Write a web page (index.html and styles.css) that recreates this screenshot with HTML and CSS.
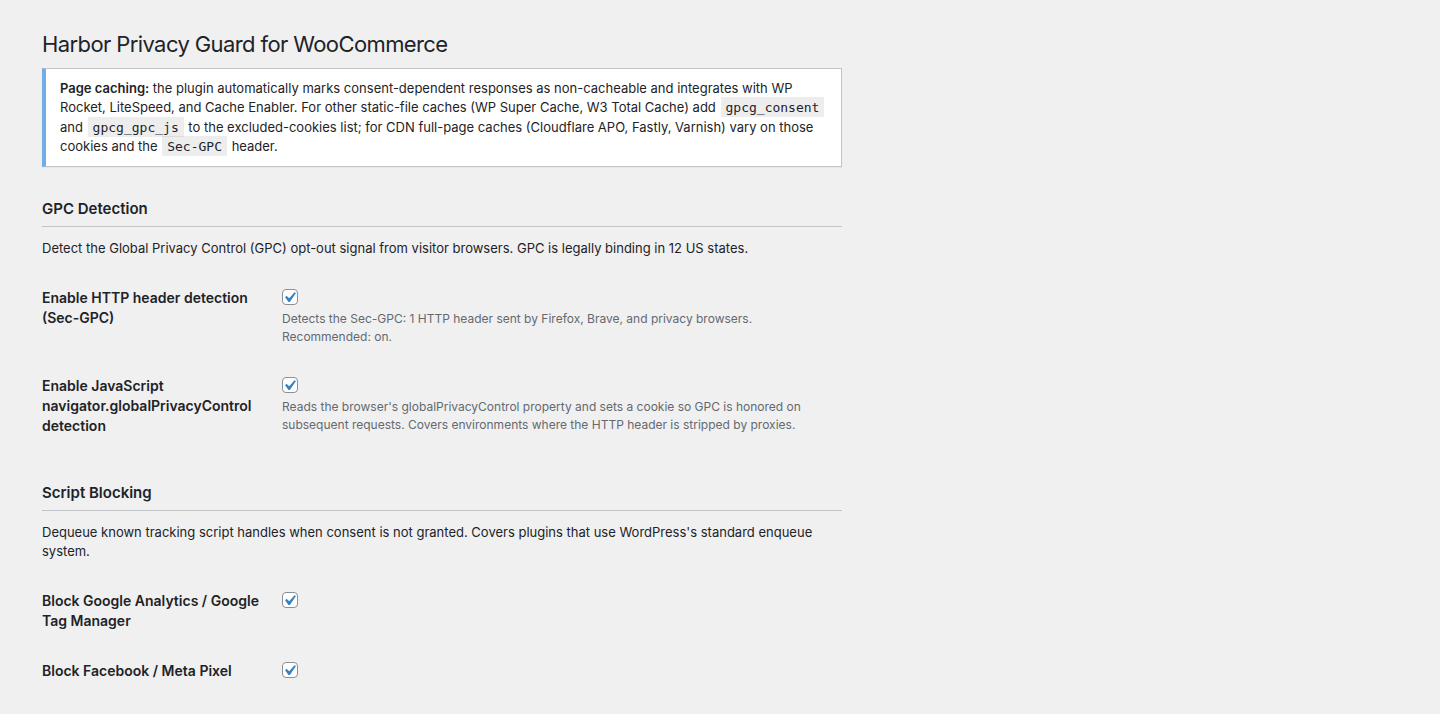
FILE: index.html
```html
<!DOCTYPE html>
<html lang="en">
<head>
    <meta charset="UTF-8">
    <meta name="viewport" content="width=device-width, initial-scale=1.0">
    <title>Harbor Privacy Guard for WooCommerce</title>
    <link rel="stylesheet" href="styles.css">
</head>
<body>
    <div class="wrap">
        <h1>Harbor Privacy Guard for WooCommerce</h1>

        <!-- Caching notice -->
        <div class="notice notice-info">
            <p><strong>Page caching:</strong> the plugin automatically marks consent-dependent responses as non-cacheable and integrates with WP Rocket, LiteSpeed, and Cache Enabler. For other static-file caches (WP Super Cache, W3 Total Cache) add <code>gpcg_consent</code> and <code>gpcg_gpc_js</code> to the excluded-cookies list; for CDN full-page caches (Cloudflare APO, Fastly, Varnish) vary on those cookies and the <code>Sec-GPC</code> header.</p>
        </div>

        <!-- GPC Detection -->
        <h2 class="section-title">GPC Detection</h2>
        <p class="section-desc">Detect the Global Privacy Control (GPC) opt-out signal from visitor browsers. GPC is legally binding in 12 US states.</p>
        <div class="form-table">
            <div class="form-row">
                <label class="form-label" for="gpcHeader">Enable HTTP header detection (Sec-GPC)</label>
                <div class="form-field">
                    <span class="checkbox" id="gpcHeader"><svg viewBox="0 0 20 20" width="21" height="21"><path d="M14.83 4.89l1.34.94-5.81 8.38H9.02L5.78 9.67l1.34-1.25 2.570 2.4z"/></svg></span>
                    <p class="description">Detects the Sec-GPC: 1 HTTP header sent by Firefox, Brave, and privacy browsers. Recommended: on.</p>
                </div>
            </div>
            <div class="form-row">
                <label class="form-label" for="gpcJs">Enable JavaScript navigator.globalPrivacyControl detection</label>
                <div class="form-field">
                    <span class="checkbox" id="gpcJs"><svg viewBox="0 0 20 20" width="21" height="21"><path d="M14.83 4.89l1.34.94-5.81 8.38H9.02L5.78 9.67l1.34-1.25 2.57 2.4z"/></svg></span>
                    <p class="description">Reads the browser's globalPrivacyControl property and sets a cookie so GPC is honored on subsequent requests. Covers environments where the HTTP header is stripped by proxies.</p>
                </div>
            </div>
        </div>

        <!-- Script Blocking -->
        <h2 class="section-title">Script Blocking</h2>
        <p class="section-desc">Dequeue known tracking script handles when consent is not granted. Covers plugins that use WordPress's standard enqueue system.</p>
        <div class="form-table">
            <div class="form-row">
                <label class="form-label" for="blockGa">Block Google Analytics / Google Tag Manager</label>
                <div class="form-field">
                    <span class="checkbox" id="blockGa"><svg viewBox="0 0 20 20" width="21" height="21"><path d="M14.83 4.89l1.34.94-5.81 8.38H9.02L5.78 9.67l1.34-1.25 2.57 2.4z"/></svg></span>
                </div>
            </div>
            <div class="form-row">
                <label class="form-label" for="blockFb">Block Facebook / Meta Pixel</label>
                <div class="form-field">
                    <span class="checkbox" id="blockFb"><svg viewBox="0 0 20 20" width="21" height="21"><path d="M14.83 4.89l1.34.94-5.81 8.38H9.02L5.78 9.67l1.34-1.25 2.57 2.4z"/></svg></span>
                </div>
            </div>
        </div>
    </div>
</body>
</html>
```

FILE: styles.css
```css
body {
    margin: 0;
    background: #f0f0f1;
    color: #1d2327;
    font-family: Inter, "Liberation Sans", sans-serif;
    font-size: 13px;
    line-height: 1.5;
}
.wrap {
    width: 800px;
    margin-left: 42px;
    padding-top: 29px;
}
h1 {
    margin: 0;
    font-size: 22px;
    font-weight: 400;
    line-height: 30px;
    letter-spacing: -0.6px;
}
.notice {
    margin-top: 9px;
    background: #fff;
    border: 1px solid #c3c4c7;
    border-left: 4px solid #72aee6;
    box-shadow: 0 1px 1px rgba(0, 0, 0, 0.04);
    padding: 1px 12px;
}
.notice p {
    margin: 6.5px 0;
    padding: 2px;
}
.notice strong {
    font-weight: 600;
}
code {
    font-family: "DejaVu Sans Mono", monospace;
    font-size: 13px;
    background: rgba(0, 0, 0, 0.07);
    padding: 3px 5px 2px;
    margin: 0 1px;
}
.section-title {
    margin: 32px 0 0;
    font-size: 15px;
    font-weight: 600;
    line-height: 20px;
    padding-bottom: 7px;
    border-bottom: 1px solid #c3c4c7;
}
.section-desc {
    margin: 12px 0 14px;
}
.form-row {
    display: grid;
    grid-template-columns: 230px 1fr;
    padding: 15px 0;
}
.form-label {
    padding-right: 10px;
    font-size: 14px;
    font-weight: 600;
    line-height: 20px;
}
.form-field {
    padding: 0 10px;
}
.checkbox {
    display: block;
    width: 16px;
    height: 16px;
    margin-top: 1px;
    box-sizing: border-box;
    border: 1px solid #8c8f94;
    border-radius: 4px;
    background: #fff;
    position: relative;
}
.checkbox svg {
    position: absolute;
    left: -4px;
    top: -3px;
    fill: #3582c4;
}
.description {
    margin: 5px 0 0;
    color: #646970;
    font-size: 12px;
    line-height: 18px;
}
```
